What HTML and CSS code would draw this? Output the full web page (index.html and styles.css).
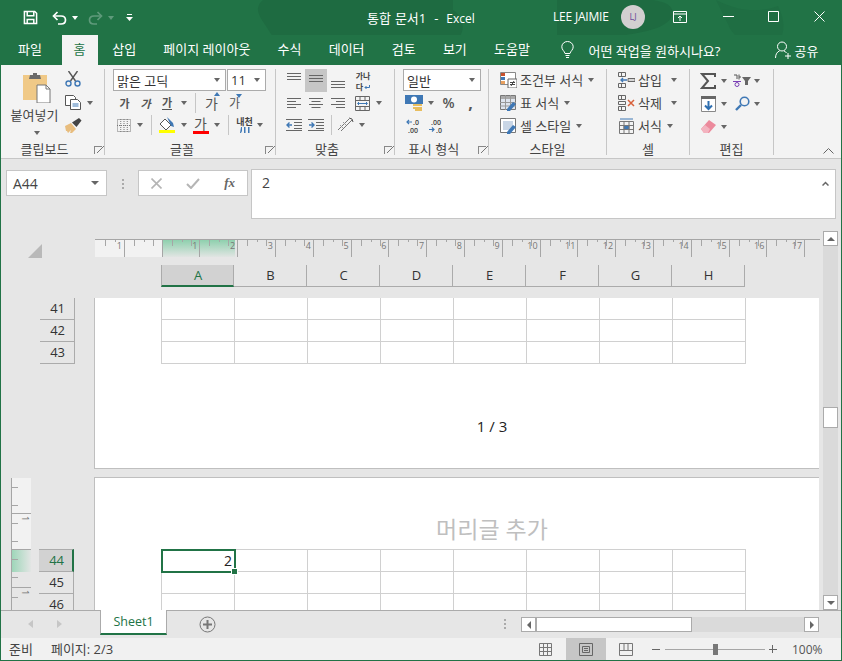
FILE: index.html
```html
<!doctype html>
<html lang="ko">
<head>
    <meta charset="utf-8">
    <title>통합 문서1 - Excel</title>
    <link rel="stylesheet" href="styles.css">
</head>

<body>
<div class="window">
    <div class="titlebar">
        <svg class="title-bg" width="840" height="64" viewBox="0 0 840 64">
            <path d="M262 0h190v10c10 6 14 20 4 30-14 10-60 8-80 14-40 6-60 0-80-6-10-6-20-6-26-14-8-14-20-24-8-34z" fill="#1e6b41"/>
            <path d="M556 0h90c20 0 30 8 24 18-8 12-30 14-50 18-20 4-50 6-64 2z" fill="#1e6b41"/>
            <path d="M715 0c20 10 40 14 62 6 10 20 6 36-10 44-20-2-36-14-40-26z" fill="#1f6e43"/>
        </svg>
        <svg class="qat-save" width="15" height="15" viewBox="0 0 16 16" fill="none" stroke="#fff" stroke-width="1.6"><path d="M1.500 1.500h11l2 2v11h-13z"/><path d="M4.500 2v4h7V2M4.500 14.500V10h7v4.500"/></svg>
        <svg class="qat-undo" width="15" height="14" viewBox="0 0 15 14" fill="none" stroke="#fff" stroke-width="1.7"><path d="M5.500 1L1.500 5l4 4"/><path d="M2 5h7c6 0 6 8 0 8H6"/></svg>
        <span class="caret caret-white qat-caret"></span>
        <svg class="qat-redo" width="15" height="14" viewBox="0 0 15 14" fill="none" stroke="#5f9a7b" stroke-width="1.7"><path d="M9.500 1l4 4-4 4"/><path d="M13 5H6c-6 0-6 8 0 8h3"/></svg>
        <span class="caret caret-dim qat-caret"></span>
        <svg class="qat-more" width="7" height="8" viewBox="0 0 7 8"><path d="M1 0h5v1H1z" fill="#fff"/><path d="M0 3h7L3.500 7z" fill="#fff"/></svg>
        <span class="doc-title">통합 문서1 &nbsp;-&nbsp; <span class="latin">Excel</span></span>
        <span class="user-name">LEE JAIMIE</span>
        <span class="avatar">LJ</span>
        <svg class="win-display" width="14" height="12" viewBox="0 0 14 12" fill="none" stroke="#fff"><path d="M.5 .5h13v11H.5zM.5 3h13M7 10V5M5 7l2-2 2 2"/></svg>
        <svg class="win-min" width="11" height="1" viewBox="0 0 11 1"><path d="M0 0h11v1H0z" fill="#fff"/></svg>
        <svg class="win-max" width="11" height="11" viewBox="0 0 11 11" fill="none" stroke="#fff"><path d="M.5 .5h10v10H.5z"/></svg>
        <svg class="win-close" width="11" height="11" viewBox="0 0 11 11" stroke="#fff"><path d="M.5 .5l10 10M10.500 .5l-10 10"/></svg>
    </div>

    <div class="tabs">
        <span class="tab tab-first">파일</span>
        <span class="tab tab-on">홈</span>
        <span class="tab">삽입</span>
        <span class="tab">페이지 레이아웃</span>
        <span class="tab">수식</span>
        <span class="tab">데이터</span>
        <span class="tab">검토</span>
        <span class="tab">보기</span>
        <span class="tab">도움말</span>
        <svg class="bulb" width="13" height="18" viewBox="0 0 13 18" fill="none" stroke="#fff"><path d="M4 12.500C3.500 10 .8 9 .8 5.800a5.700 5.300 0 0 1 11.400 0C12.200 9 9.500 10 9 12.500z"/><path d="M4.500 14.500h4M5 16.500h3"/></svg>
        <span class="tell-me">어떤 작업을 원하시나요?</span>
        <svg class="share-icon" width="17" height="18" viewBox="0 0 17 18" fill="none" stroke="#fff"><circle cx="7" cy="5.500" r="4.500"/><path d="M.5 17c0-4 2-6.500 4-7M9 10c1 .3 2 1 2.500 2M10 15h6M13 12v6"/></svg>
        <span class="share">공유</span>
    </div>

    <div class="ribbon">
        <div class="group g-clip">
            <div class="group-body clip-body">
                <div class="paste">
                    <svg width="28" height="30" viewBox="0 0 28 30"><path d="M0 3h24v25H0z" fill="#f0c987" transform="translate(0 -1)"/><path d="M7 2h3V0h4v2h3l1 4H6z" fill="#6a6a6a"/><path d="M14 12h9l4 4v14H14z" fill="#fff" stroke="#777"/><path d="M23 12v4h4" fill="none" stroke="#777"/></svg>
                    <span class="paste-label">붙여넣기</span>
                    <span class="caret"></span>
                </div>
                <div class="clip-tools">
                    <svg width="16" height="16" viewBox="0 0 16 16" fill="none"><path d="M3.500 0l7 10M12.500 0l-7 10" stroke="#555" stroke-width="1.400"/><circle cx="3.500" cy="12.500" r="2.500" stroke="#3f78b5" stroke-width="1.400"/><circle cx="12.500" cy="12.500" r="2.500" stroke="#3f78b5" stroke-width="1.400"/></svg>
                    <div class="tool-line">
                        <svg width="16" height="15" viewBox="0 0 16 15" fill="#fff" stroke="#555"><path d="M.5 .5h8l2 2v8H.5z"/><path d="M5.500 4.500h7l3 3v7h-10z"/><path d="M7.500 9h6M7.500 11h6" stroke="#3f78b5"/></svg>
                        <span class="caret"></span>
                    </div>
                    <svg width="17" height="15" viewBox="0 0 17 15"><path d="M0 8l6-3 5 6-4 4H5l1-3-3 3-1-2-1 0z" fill="#e8bd7e"/><path d="M7 4.500l7-4.500 2.500 2.500-5 6.500z" fill="#444"/></svg>
                </div>
            </div>
            <div class="group-label"><span>클립보드</span><i class="launcher"></i></div>
        </div>

        <div class="group g-font">
            <div class="group-body">
                <div class="font-selects">
                    <span class="select sel-font">맑은 고딕<span class="caret"></span></span>
                    <span class="select sel-size">11<span class="caret"></span></span>
                </div>
                <div class="font-row font-row2">
                    <b class="ga">가</b>
                    <i class="ga">가</i>
                    <span class="ga ga-u">가</span>
                    <span class="caret"></span>
                    <span class="vsep"></span>
                    <span class="ga-size ga-up">가</span>
                    <span class="ga-size ga-down">가</span>
                </div>
                <div class="font-row font-row3">
                    <svg width="14" height="13" viewBox="0 0 14 13" fill="none" stroke="#777" stroke-dasharray="1 1"><path d="M.5 .5h13v12H.5zM7 0v13M0 6.500h14M3.750 0v13M10.250 0v13"/></svg>
                    <span class="caret"></span>
                    <span class="vsep"></span>
                    <svg width="16" height="16" viewBox="0 0 16 16"><path d="M1 7l5-5 6 6-5 5z" fill="#fff" stroke="#555"/><path d="M8 0l6 6 1 4-3-1z" fill="#3f78b5"/><path d="M0 13h16v3H0z" fill="#ff0"/></svg>
                    <span class="caret"></span>
                    <span class="color-a">가</span>
                    <span class="caret"></span>
                    <span class="vsep"></span>
                    <span class="phonetic">내천<svg width="10" height="6" viewBox="0 0 10 6" fill="#3f78b5"><path d="M1 0h1v4L1 6H0zM4 0h1.500v6H4zM8 0h1.500v6H8z"/></svg></span>
                    <span class="caret"></span>
                </div>
            </div>
            <div class="group-label"><span>글꼴</span><i class="launcher"></i></div>
        </div>

        <div class="group g-align">
            <div class="group-body">
                <div class="align-row align-row1">
                    <svg width="14" height="11" viewBox="0 0 14 11" stroke="#666"><path d="M0 .5h14M0 3.500h14M0 6.500h14"/></svg>
                    <span class="align-on"><svg width="14" height="11" viewBox="0 0 14 11" stroke="#666"><path d="M0 2.500h14M0 5.500h14M0 8.500h14"/></svg></span>
                    <svg class="a-low" width="14" height="11" viewBox="0 0 14 11" stroke="#666"><path d="M0 4.500h14M0 7.500h14M0 10.500h14"/></svg>
                    <span class="wrap-txt">가나<br>다<svg width="6" height="5" viewBox="0 0 6 5" fill="none" stroke="#3f78b5"><path d="M5.500 0v2.500H1M2.500 1L1 2.500 2.500 4"/></svg></span>
                </div>
                <div class="align-row align-row2">
                    <svg width="14" height="11" viewBox="0 0 14 11" stroke="#666"><path d="M0 .5h14M0 3.500h9M0 6.500h14M0 9.500h9"/></svg>
                    <svg width="14" height="11" viewBox="0 0 14 11" stroke="#666"><path d="M0 .5h14M2.500 3.500h9M0 6.500h14M2.500 9.500h9"/></svg>
                    <svg width="14" height="11" viewBox="0 0 14 11" stroke="#666"><path d="M0 .5h14M5 3.500h9M0 6.500h14M5 9.500h9"/></svg>
                    <svg width="15" height="15" viewBox="0 0 15 15" fill="none" stroke="#666"><path d="M.5 .5h14v14H.5zM.5 4.500h14M.5 10.500h14M5 .5v4M10 .5v4M5 10.500v4M10 10.500v4"/><path d="M3 7.500h9M4 6l-1.500 1.500L4 9M11 6l1.500 1.500L11 9" stroke="#3f78b5"/></svg>
                    <span class="caret"></span>
                </div>
                <div class="align-row align-row3">
                    <svg width="16" height="12" viewBox="0 0 16 12" fill="none" stroke="#666"><path d="M0 .5h16M8 3.500h8M8 6.500h8M8 9.500h8M0 11.500h16" stroke-width="1"/><path d="M6 6H1M3.500 3.500L1 6l2.500 2.500" stroke="#3f78b5" stroke-width="1.400"/></svg>
                    <svg width="16" height="12" viewBox="0 0 16 12" fill="none" stroke="#666"><path d="M0 .5h16M8 3.500h8M8 6.500h8M8 9.500h8M0 11.500h16"/><path d="M1 6h5M3.500 3.500L6 6 3.500 8.500" stroke="#3f78b5" stroke-width="1.400"/></svg>
                    <span class="vsep"></span>
                    <svg width="18" height="16" viewBox="0 0 18 16" fill="none" stroke="#777"><path d="M1 13L12 2M4 14L15 3"/><path d="M12 1l3 1 1 3" stroke="#555"/><path d="M3 8l3 3M6 5l3 3" stroke="#999"/></svg>
                    <span class="caret"></span>
                </div>
            </div>
            <div class="group-label"><span>맞춤</span><i class="launcher"></i></div>
        </div>

        <div class="group g-num">
            <div class="group-body">
                <span class="select sel-num">일반<span class="caret"></span></span>
                <div class="num-row num-row2">
                    <svg width="18" height="16" viewBox="0 0 18 16"><path d="M0 0h18v9H0z" fill="#3f78b5"/><circle cx="9" cy="4.500" r="3" fill="#fff"/><path d="M8 9h9v2H8zM8 12h9v2H8zM10 14h7v2h-7z" fill="#e8bd5e"/></svg>
                    <span class="caret"></span>
                    <span class="pct">%</span>
                    <span class="comma">,</span>
                </div>
                <div class="num-row num-row3">
                    <svg width="16" height="15" viewBox="0 0 16 15"><path d="M1 4h5M3 2L1 4l2 2" fill="none" stroke="#3f78b5" stroke-width="1.200"/><text x="7" y="7" class="dec">.0</text><text x="2" y="14.500" class="dec">.00</text></svg>
                    <svg width="16" height="15" viewBox="0 0 16 15"><text x="3" y="6.500" class="dec">.00</text><path d="M1 11.500h5M4 9.500l2 2-2 2" fill="none" stroke="#3f78b5" stroke-width="1.200"/><text x="8" y="14.500" class="dec">.0</text></svg>
                </div>
            </div>
            <div class="group-label"><span>표시 형식</span><i class="launcher"></i></div>
        </div>

        <div class="group g-style">
            <div class="group-body">
                <div class="cmd">
                    <svg width="17" height="16" viewBox="0 0 17 16"><path d="M.5 .5h15v12H.5z" fill="#fff" stroke="#888"/><path d="M1 1h4v3H1z" fill="#c8502d"/><path d="M1 5h4v3H1z" fill="#3f78b5"/><path d="M1 9h4v3H1z" fill="#e8a05e"/><path d="M8 7h9v9H8z" fill="#fff" stroke="#666"/><path d="M10 10.500h5M10 12.500h5M11 14l3-5" stroke="#444" fill="none"/></svg>
                    <span>조건부 서식</span><span class="caret"></span>
                </div>
                <div class="cmd">
                    <svg width="17" height="16" viewBox="0 0 17 16"><path d="M.5 .5h15v14H.5z" fill="#dfe5ee" stroke="#777"/><path d="M1 1h14v3H1z" fill="#aaa"/><path d="M5.500 0v15M10.500 0v15M0 7.500h16M0 11h16" stroke="#999"/><path d="M7 14l6-7 3 2-6 7H7z" fill="#3f78b5"/></svg>
                    <span>표 서식</span><span class="caret"></span>
                </div>
                <div class="cmd">
                    <svg width="17" height="16" viewBox="0 0 17 16"><path d="M.5 .5h15v14H.5z" fill="#fff" stroke="#777"/><path d="M3 3h10v9H3z" fill="#c9d6e6"/><path d="M7 14l6-7 3 2-6 7H7z" fill="#3f78b5"/></svg>
                    <span>셀 스타일</span><span class="caret"></span>
                </div>
            </div>
            <div class="group-label"><span>스타일</span></div>
        </div>

        <div class="group g-cell">
            <div class="group-body">
                <div class="cmd">
                    <svg width="17" height="16" viewBox="0 0 17 16" fill="none" stroke="#666"><path d="M.5 .5h7v4h-7zM3.500 .5v4M.5 11.500h7v4h-7zM3.500 11.500v4"/><path d="M10 6.500h7v3h-7z" fill="#d5d5d5"/><path d="M9 8H3M5 6L3 8l2 2" stroke="#3f78b5" stroke-width="1.400"/></svg>
                    <span>삽입</span><span class="caret caret-far"></span>
                </div>
                <div class="cmd">
                    <svg width="17" height="16" viewBox="0 0 17 16" fill="none" stroke="#666"><path d="M.5 .5h7v4h-7zM3.500 .5v4M.5 11.500h7v4h-7zM3.500 11.500v4M.5 6.500h7v3h-7z"/><path d="M10 5l6 6M16 5l-6 6" stroke="#d8603a" stroke-width="1.500"/></svg>
                    <span>삭제</span><span class="caret caret-far"></span>
                </div>
                <div class="cmd">
                    <svg width="17" height="16" viewBox="0 0 17 16" fill="none" stroke="#777"><path d="M1.500 3.500h14v12h-14zM1.500 7.500h14M1.500 11.500h14M6 3.500v12M11 3.500v12"/><path d="M6 7.500h5v4H6z" fill="#3f78b5"/><path d="M2 1h13" stroke="#3f78b5"/></svg>
                    <span>서식</span><span class="caret"></span>
                </div>
            </div>
            <div class="group-label"><span>셀</span></div>
        </div>

        <div class="group g-edit">
            <div class="group-body">
                <div class="edit-row">
                    <svg width="16" height="16" viewBox="0 0 16 16" fill="none" stroke="#555" stroke-width="2"><path d="M15 4V1H2l6 7-6 7h13v-3"/></svg>
                    <span class="caret"></span>
                    <span class="sort"><svg width="8" height="13" viewBox="0 0 8 13" fill="none"><path d="M1 1h3v4M6 .5v5M6 3h2" stroke="#555"/><path d="M0 7.500h8" stroke="#7a3fb5"/><circle cx="4" cy="10.500" r="2" stroke="#7a3fb5"/></svg><svg width="9" height="8" viewBox="0 0 9 8"><path d="M0 0h9L6 4v4H3V4z" fill="#666"/></svg></span>
                    <span class="caret"></span>
                </div>
                <div class="edit-row">
                    <svg width="15" height="16" viewBox="0 0 15 16"><path d="M.5 .5h14v15H.5z" fill="#fff" stroke="#888"/><path d="M0 0h15v3H0z" fill="#666"/><path d="M7.500 5v8M4 9.500l3.500 3.500 3.500-3.500" fill="none" stroke="#2f6fb0" stroke-width="2"/></svg>
                    <span class="caret"></span>
                    <svg width="15" height="15" viewBox="0 0 15 15" fill="none" stroke="#3f78b5" stroke-width="1.600"><circle cx="9.500" cy="5.500" r="4.300"/><path d="M6 9l-5 5" stroke-width="2.400"/></svg>
                    <span class="caret"></span>
                </div>
                <div class="edit-row">
                    <svg width="15" height="13" viewBox="0 0 15 13"><path d="M0 9l8-9 7 5-7 8H3z" fill="#ec8a9c"/><path d="M0 9l4-4 5 4-2 4H3z" fill="#f3b3bf"/></svg>
                    <span class="caret"></span>
                </div>
            </div>
            <div class="group-label"><span>편집</span></div>
        </div>

        <div class="ribbon-end">
            <svg width="11" height="6" viewBox="0 0 11 6" fill="none" stroke="#666"><path d="M.5 5.500l5-5 5 5"/></svg>
        </div>
    </div>

    <div class="formula-bar">
        <div class="name-box"><span>A44</span><span class="caret"></span></div>
        <div class="fb-dots"><i></i><i></i><i></i></div>
        <div class="fb-btns">
            <svg width="11" height="11" viewBox="0 0 11 11" stroke="#b5b5b5" stroke-width="1.600"><path d="M.5 .5l10 10M10.500 .5l-10 10"/></svg>
            <svg width="14" height="11" viewBox="0 0 14 11" fill="none" stroke="#b5b5b5" stroke-width="2"><path d="M1 6l4 4 8-9"/></svg>
            <span class="fx">fx</span>
        </div>
        <div class="fb-input"><span>2</span><svg width="7" height="5" viewBox="0 0 7 5" fill="none" stroke="#666" stroke-width="1.500"><path d="M.5 4.500l3-3 3 3"/></svg></div>
    </div>

    <div class="sheet">
        <div class="sheet-main">
            <div class="top-strip">
                <div class="corner"><i class="tri"></i></div>
                <div class="top-right">
                    <div class="ruler">
                        <span class="rc rc-first">1</span>
                        <span class="rc"></span>
                        <span class="rc">1</span><span class="rc">2</span><span class="rc">3</span><span class="rc">4</span><span class="rc">5</span><span class="rc">6</span>
                        <span class="rc">7</span><span class="rc">8</span><span class="rc">9</span><span class="rc">10</span><span class="rc">11</span><span class="rc">12</span>
                        <span class="rc">13</span><span class="rc">14</span><span class="rc">15</span><span class="rc">16</span><span class="rc">17</span>
                    </div>
                    <div class="col-heads">
                        <span class="ch ch-on">A</span><span class="ch">B</span><span class="ch">C</span><span class="ch">D</span>
                        <span class="ch">E</span><span class="ch">F</span><span class="ch">G</span><span class="ch">H</span>
                    </div>
                </div>
            </div>
            <div class="viewport">
                <div class="page-row">
                    <div class="gutter">
                        <div class="row-heads">
                            <span class="rh">41</span><span class="rh">42</span><span class="rh">43</span>
                        </div>
                    </div>
                    <div class="page page-one">
                        <div class="grid">
                            <i></i><i></i><i></i><i></i><i></i><i></i><i></i><i></i>
                            <i></i><i></i><i></i><i></i><i></i><i></i><i></i><i></i>
                            <i></i><i></i><i></i><i></i><i></i><i></i><i></i><i></i>
                        </div>
                        <div class="page-foot">1 / 3</div>
                    </div>
                </div>
                <div class="page-row page-row-two">
                    <div class="gutter">
                        <div class="vruler">
                            <span class="vr"></span><span class="vr vr-num">1</span><span class="vr vr-blank"></span><span class="vr vr-num">1</span>
                        </div>
                        <div class="row-heads row-heads-two">
                            <span class="rh rh-on">44</span><span class="rh">45</span><span class="rh">46</span>
                        </div>
                    </div>
                    <div class="page page-two">
                        <div class="page-head">머리글 추가</div>
                        <div class="grid">
                            <i class="cell-on">2</i><i></i><i></i><i></i><i></i><i></i><i></i><i></i>
                            <i></i><i></i><i></i><i></i><i></i><i></i><i></i><i></i>
                            <i></i><i></i><i></i><i></i><i></i><i></i><i></i><i></i>
                        </div>
                    </div>
                </div>
            </div>
        </div>
        <div class="vscroll">
            <span class="sb-btn"><span class="tri-up"></span></span>
            <span class="sb-thumb"></span>
            <span class="sb-btn sb-down"><span class="tri-down"></span></span>
        </div>
    </div>

    <div class="tabbar">
        <span class="nav-l"></span>
        <span class="nav-r"></span>
        <span class="sheet-tab">Sheet1</span>
        <svg class="add-sheet" width="17" height="17" viewBox="0 0 17 17" fill="none" stroke="#777"><circle cx="8.500" cy="8.500" r="7.500"/><path d="M8.500 4v9M4 8.500h9" stroke-width="2"/></svg>
        <div class="fb-dots tab-dots"><i></i><i></i><i></i></div>
        <div class="hscroll">
            <span class="hs-btn"><span class="tri-left"></span></span>
            <span class="hs-thumb"></span>
            <span class="hs-btn hs-end"><span class="tri-right"></span></span>
        </div>
    </div>

    <div class="statusbar">
        <span class="st-ready">준비</span>
        <span class="st-page">페이지: 2/3</span>
        <span class="view-btn view-first"><svg width="13" height="13" viewBox="0 0 13 13" fill="none" stroke="#777"><path d="M.5 .5h12v12H.5zM.5 4.500h12M.5 8.500h12M4.500 .5v12M8.500 .5v12"/></svg></span>
        <span class="view-btn view-on"><svg width="14" height="13" viewBox="0 0 14 13" fill="none" stroke="#666"><path d="M.5 .5h13v12H.5zM3.500 3.500h7v6h-7zM5 5.500h4M5 7.500h4"/></svg></span>
        <span class="view-btn"><svg width="14" height="13" viewBox="0 0 14 13" fill="none" stroke="#777"><path d="M.5 .5h13v12H.5zM.5 7.500h13M5 .5v7M9 .5v7"/></svg></span>
        <span class="zoom-minus"></span>
        <span class="zoom-track"><i></i></span>
        <span class="zoom-plus"></span>
        <span class="zoom-val">100%</span>
    </div>
</div>
</body>

</html>
```

FILE: styles.css
```css
* {box-sizing: border-box;}
html, body {margin: 0; padding: 0; overflow: hidden;}
body {font-family: "Open Sans", "Noto Sans CJK KR", sans-serif; font-size: 13px; color: #444;}
i {font-style: normal;}
svg {display: block; flex: none;}

.window {width: 842px; height: 661px; border: 1px solid #217346; border-top: 0; background: #e6e6e6; display: flex; flex-direction: column;}

/* title bar */
.titlebar {height: 35px; background: #217346; display: flex; align-items: center; color: #fff; position: relative; flex: none;}
.title-bg {position: absolute; left: 0; top: 0;}
.titlebar > *:not(.title-bg) {position: relative;}
.qat-save {margin-left: 22px;}
.qat-undo {margin-left: 14px;}
.qat-caret {margin-left: 5px;}
.qat-redo {margin-left: 10px;}
.qat-more {margin-left: 12px;}
.doc-title {margin-left: 234px; width: 186px; white-space: nowrap; word-spacing: 0.6px;}
.latin {font-size: 12px;}
.user-name {width: 68px; white-space: nowrap; letter-spacing: -0.2px; font-size: 12px; margin-bottom: 2px;}
.avatar {width: 24px; height: 24px; border-radius: 50%; background: #d2cfd0; color: #6b4c9a; font-size: 9px; text-align: center; line-height: 24px; margin-bottom: 2px;}
.win-display {margin-left: 28px; margin-bottom: 2px;}
.win-min {margin-left: 36px; margin-bottom: 2px;}
.win-max {margin-left: 34px; margin-bottom: 2px;}
.win-close {margin-left: 35px; margin-bottom: 2px;}

.caret {display: inline-block; flex: none; width: 0; height: 0; border-left: 3.5px solid transparent; border-right: 3.5px solid transparent; border-top: 4px solid #666;}
.caret-white {border-top-color: #fff;}
.caret-dim {border-top-color: #5f9a7b;}

/* tabs */
.tabs {height: 30px; background: #217346; display: flex; align-items: center; color: #fff; flex: none; position: relative; white-space: nowrap;}
.tab {height: 30px; line-height: 29px; padding: 0 13.6px;}
.tab-first {margin-left: 3.5px;}
.tab-on {margin-left: 6px; padding: 0 12px; background: #f3f3f3; color: #217346; margin-right: 1px;}
.bulb {margin-left: 18px;}
.tell-me {margin-left: 14px;}
.share-icon {margin-left: 55px;}
.share {margin-left: 2px;}

/* ribbon */
.ribbon {height: 94px; background: #f3f3f3; border-bottom: 1px solid #c6c6c6; display: flex; flex: none; padding-top: 4px; padding-bottom: 3px;}
.group {display: flex; flex-direction: column; border-right: 1px solid #c6c6c6; flex: none;}
.group-body {flex: 1; min-height: 0;}
.group-label {height: 14px; display: flex; align-items: center; color: #444;}
.group-label span {flex: 1; text-align: center;}
.launcher {width: 16px; height: 9px; flex: none; margin-top: 4px; background: linear-gradient(135deg, transparent 45%, #777 45%, #777 55%, transparent 55%) 9px 0 / 7px 7px no-repeat; position: relative;}
.launcher::before {content: ""; position: absolute; left: 6px; top: 0; width: 7px; height: 7px; border-top: 1px solid #888; border-left: 1px solid #888;}
.g-clip {width: 104px;}
.g-font {width: 171px;}
.g-align {width: 119px;}
.g-num {width: 94px;}
.g-style {width: 118px;}
.g-cell {width: 83px;}
.g-edit {width: 84px;}
.ribbon-end {flex: 1; display: flex; align-items: flex-end; justify-content: flex-end; padding: 0 7px 1px 0;}

.clip-body {display: flex;}
.paste {width: 63px; margin-left: 4px; display: flex; flex-direction: column; align-items: center; padding-top: 4px;}
.paste-label {margin: 2px 4px 0 0; line-height: 20px; white-space: nowrap;}
.paste .caret {margin-top: 6px;}
.clip-tools {display: flex; flex-direction: column; gap: 8px; margin-left: -3px; padding-top: 2px;}
.tool-line {display: flex; align-items: center; gap: 6px;}

.select {display: flex; align-items: center; justify-content: space-between; height: 22px; background: #fff; border: 1px solid #ababab; padding: 0 5px 0 3px; color: #333; flex: none;}
.font-selects {display: flex; gap: 1px; padding: 0 0 0 8px; margin-bottom: 1px;}
.sel-font {width: 113px;}
.sel-size {width: 39px;}
.font-row {display: grid; align-items: center; justify-items: center; height: 22px; padding-left: 9px;}
.font-row2 {grid-template-columns: 21px 21px 22px 12px 10px 23px 23px;}
.font-row3 {grid-template-columns: 20px 12px 10px 22px 11px 23px 10px 12px 21px 10px;}
.ga {font-size: 11px; font-weight: 700; color: #555;}
i.ga {font-style: italic;}
.ga-u {border-bottom: 1px solid #555; line-height: 13px;}
.ga-size {font-size: 14px; color: #555; position: relative;}
.ga-down {font-size: 12px;}
.ga-up::after {content: ""; position: absolute; left: 9px; top: -1px; border-left: 3px solid transparent; border-right: 3px solid transparent; border-bottom: 4px solid #3f78b5;}
.ga-down::after {content: ""; position: absolute; left: 7px; top: 0; border-left: 3px solid transparent; border-right: 3px solid transparent; border-top: 4px solid #3f78b5;}
.vsep {width: 1px; height: 20px; background: #c6c6c6;}
.color-a {font-size: 14px; line-height: 14px; color: #555; border-bottom: 3px solid #f00; width: 16px; text-align: center;}
.phonetic {display: flex; flex-direction: column; align-items: center; font-size: 9px; line-height: 10px; color: #444; font-weight: 700;}

.align-row {display: grid; align-items: center; justify-items: center; height: 22px; padding-left: 7px;}
.align-row1 {grid-template-columns: 22px 22px 22px 2px 24px; height: 23px;}
.align-row1 svg:first-child {margin-bottom: 5px;}
.align-row2 {grid-template-columns: 22px 22px 22px 2px 23px 10px;}
.align-row2 > svg:nth-child(4), .align-row1 .wrap-txt {grid-column: 5;}
.align-row2 .caret {grid-column: 6;}
.align-row3 {grid-template-columns: 22px 22px 8px 22px 9px;}
.align-on {width: 22px; height: 23px; background: #c6c6c6; display: flex; align-items: center; justify-content: center;}
.a-low {margin-top: 4px;}
.wrap-txt {font-size: 8px; line-height: 11px; color: #444; text-align: center; font-weight: 700;}
.wrap-txt svg {display: inline-block; margin-left: 1px;}

.g-num .group-body {padding-left: 8px;}
.sel-num {width: 78px; padding-left: 3px;}
.num-row {display: grid; align-items: center; justify-items: center; height: 23px;}
.num-row2 {grid-template-columns: 22px 11px 25px 19px;}
.num-row3 {grid-template-columns: 21px 23px;}
.pct {font-size: 14px; font-weight: 600; color: #555;}
.comma {font-size: 16px; font-weight: 700; line-height: 12px; color: #555;}
.dec {font-size: 7px; fill: #444; font-weight: 600;}

.g-style .group-body, .g-cell .group-body {margin-top: -1px;}
.cmd {display: flex; align-items: center; height: 23px; padding-left: 11px; white-space: nowrap; color: #444;}
.cmd svg {margin-right: 3px;}
.cmd .caret {margin-left: 5px;}
.cmd .caret-far {margin-left: 9px;}

.edit-row {display: grid; grid-template-columns: 16px 16px 20px 10px; align-items: center; justify-items: center; height: 23px; padding-left: 10px;}
.sort {display: flex; align-items: center; gap: 1px;}

/* formula bar */
.formula-bar {display: flex; padding: 10px 5px 0 5px; height: 72px; flex: none; align-items: flex-start;}
.name-box {width: 101px; height: 26px; margin-top: 1px; background: #fff; border: 1px solid #c6c6c6; display: flex; align-items: center; justify-content: space-between; padding: 0 7px 0 6px; font-size: 14px; color: #444;}
.name-box .caret {border-left-width: 4px; border-right-width: 4px;}
.fb-dots {width: 31px; display: flex; flex-direction: column; align-items: center; gap: 2px; padding-top: 10px;}
.fb-dots i {width: 2px; height: 2px; background: #aaa;}
.fb-btns {width: 110px; height: 26px; margin-top: 1px; background: #fff; border: 1px solid #c6c6c6; display: flex; align-items: center; justify-content: space-between; padding: 0 12px;}
.fx {font-family: "Liberation Serif", serif; font-style: italic; font-weight: 700; font-size: 13px; color: #666;}
.fb-input {margin-left: 3px; width: 585px; height: 50px; background: #fff; border: 1px solid #c6c6c6; display: flex; justify-content: space-between; padding: 3px 6px 0 10px; font-size: 14px; color: #444;}
.fb-input svg {margin-top: 8px;}

/* sheet */
.sheet {height: 379px; flex: none; display: flex;}
.sheet-main {width: 822px; display: flex; flex-direction: column; padding-top: 8px;}
.top-strip {display: flex; height: 59px; flex: none;}
.corner {width: 94px; padding: 5px 0 0 27px;}
.tri {display: block; width: 0; height: 0; border-left: 14px solid transparent; border-bottom: 14px solid #b9b9b9;}
.top-right {flex: 1; min-width: 0;}
.ruler {height: 18px; display: flex; border-top: 1px solid #a6a6a6; width: 725px; background: linear-gradient(#8fd0ae, #e6e6e6) 67px 0 / 73px 18px no-repeat, linear-gradient(#f2f2f2, #f2f2f2) 0 0 / 67px 18px no-repeat;}
.rc {flex: none; width: 37.800px; height: 17px; border-right: 1px solid #a6a6a6; text-align: right; padding-right: 2px; font-size: 9px; line-height: 12px; color: #777;
    background: linear-gradient(#a6a6a6, #a6a6a6) 9px 0 / 1px 6px no-repeat, linear-gradient(#a6a6a6, #a6a6a6) 19px 0 / 1px 2px no-repeat, linear-gradient(#a6a6a6, #a6a6a6) 28px 0 / 1px 6px no-repeat;}
.rc-first {width: 29.800px; background: linear-gradient(#a6a6a6, #a6a6a6) 10px 0 / 1px 6px no-repeat, linear-gradient(#a6a6a6, #a6a6a6) 20px 0 / 1px 2px no-repeat;}
.col-heads {display: flex; margin: 8px 0 0 66px; height: 22px;}
.ch {width: 73px; height: 22px; line-height: 20px; padding-left: 1px; text-align: center; font-size: 13px; color: #333; border-right: 1px solid #ababab; border-bottom: 1px solid #ababab; flex: none;}
.ch-on {background: #d2d2d2; color: #217346; border-bottom: 2px solid #217346; border-left: 1px solid #ababab;}

.viewport {height: 312px; overflow: hidden; flex: none;}
.page-row {display: flex; padding-right: 4px;}
.page-row-two {margin-top: 8px;}
.gutter {width: 93px; flex: none; display: flex; align-items: flex-start;}
.row-heads {margin-left: 39px; width: 35px; display: flex; flex-direction: column;}
.row-heads-two {margin-left: 8px; margin-top: 72px;}
.rh {height: 22px; line-height: 21px; text-align: right; padding-right: 9px; font-size: 13px; color: #333; border-right: 1px solid #ababab; border-bottom: 1px solid #ababab; flex: none;}
.rh-on {background: #d2d2d2; color: #217346; border-right: 2px solid #217346; border-top: 1px solid #ababab; height: 23px; padding-right: 8px;}
.page {flex: 1; background: #fff; border-left: 1px solid #bfbfbf; padding-left: 66px;}
.page-one {height: 171px; border-bottom: 1px solid #bfbfbf;}
.page-two {border-top: 1px solid #bfbfbf; height: 170px;}
.grid {display: grid; grid-template-columns: repeat(8, 73px); grid-auto-rows: 22px; width: 585px; border-left: 1px solid #d0d0d0;}
.page-two .grid {border-top: 1px solid #d0d0d0;}
.grid i {border-right: 1px solid #d0d0d0; border-bottom: 1px solid #d0d0d0;}
.grid .cell-on {position: relative; outline: 2px solid #217346; outline-offset: -1px; text-align: right; padding-right: 2px; font-size: 14px; line-height: 22px; color: #222;}
.cell-on::after {content: ""; position: absolute; right: -3px; bottom: -3px; width: 5px; height: 5px; background: #217346; border: 1px solid #fff; box-sizing: content-box; margin: -1px;}
.page-foot {margin-top: 52px; width: 662px; margin-left: -66px; text-align: center; padding-left: 132px; font-size: 15px; line-height: 20px; color: #222;}
.page-head {height: 71px; width: 662px; padding-top: 38px; margin-left: -66px; padding-left: 132px; text-align: center; font-size: 23px; line-height: 26px; color: #bfbfbf;}

.vruler {width: 20px; margin-left: 10px; margin-top: 1px; display: flex; flex-direction: column; border-left: 1px solid #a6a6a6; height: 140px; background: linear-gradient(90deg, #9ed6b9, #e6e6e6) 0 71px / 20px 23px no-repeat, linear-gradient(#f2f2f2, #f2f2f2) 0 0 / 20px 71px no-repeat; flex: none;}
.vr {height: 36px; flex: none; border-bottom: 1px solid #a6a6a6; font-size: 9px; color: #777;
    background: linear-gradient(#a6a6a6, #a6a6a6) 0 9px / 6px 1px no-repeat, linear-gradient(#a6a6a6, #a6a6a6) 0 27px / 6px 1px no-repeat;}
.vr-num {writing-mode: vertical-rl; text-align: left; line-height: 12px; padding-top: 2px;}
.vr-blank {height: 38px;}

.vscroll {width: 15px; background: #dadada; display: flex; flex-direction: column; height: 379px; flex: none;}
.sb-btn {width: 15px; height: 15px; background: #fff; border: 1px solid #ababab; display: flex; align-items: center; justify-content: center; flex: none;}
.sb-thumb {width: 15px; height: 21px; background: #fff; border: 1px solid #ababab; margin-top: 161px; flex: none;}
.sb-down {margin-top: auto;}
.tri-up {border-left: 4px solid transparent; border-right: 4px solid transparent; border-bottom: 4px solid #666;}
.tri-down {border-left: 4px solid transparent; border-right: 4px solid transparent; border-top: 4px solid #666;}
.tri-left {border-top: 4px solid transparent; border-bottom: 4px solid transparent; border-right: 4px solid #666;}
.tri-right {border-top: 4px solid transparent; border-bottom: 4px solid transparent; border-left: 4px solid #666;}

/* sheet tabs */
.tabbar {height: 28px; background: #e6e6e6; border-top: 1px solid #ababab; display: flex; align-items: flex-start; flex: none;}
.nav-l {margin: 9px 0 0 27px; border-top: 4px solid transparent; border-bottom: 4px solid transparent; border-right: 5px solid #c6c6c6;}
.nav-r {margin: 9px 0 0 24px; border-top: 4px solid transparent; border-bottom: 4px solid transparent; border-left: 5px solid #c6c6c6;}
.sheet-tab {margin: -1px 0 0 38px; width: 67px; height: 25px; background: #fff; border: 1px solid #ababab; border-top: 0; border-bottom: 2px solid #217346; text-align: center; line-height: 24px; font-size: 12.500px; color: #217346;}
.add-sheet {margin: 5px 0 0 32px;}
.tab-dots {width: 6px; margin-left: 286px; padding-top: 8px;}
.hscroll {margin: 6px 0 0 13px; width: 298px; height: 15px; background: #dadada; display: flex;}
.hs-btn {width: 15px; height: 15px; background: #fff; border: 1px solid #ababab; display: flex; align-items: center; justify-content: center; flex: none;}
.hs-thumb {width: 156px; height: 15px; background: #fff; border: 1px solid #ababab; flex: none;}
.hs-end {margin-left: auto;}

/* status bar */
.statusbar {flex: 1; background: #f1f1f1; display: flex; align-items: center; color: #444; white-space: nowrap;}
.st-ready {margin: 0 0 2px 8px;}
.st-page {margin: 0 0 2px 18px; width: 484px;}
.view-btn {width: 40px; height: 22px; display: flex; align-items: center; justify-content: center; flex: none;}
.view-first {margin-left: -9px;}
.view-on {background: #c6c6c6;}
.zoom-minus {width: 8px; height: 1px; background: #666; margin-left: 6px;}
.zoom-track {width: 100px; height: 1px; background: #a6a6a6; margin-left: 5px; position: relative;}
.zoom-track i {position: absolute; left: 48px; top: -5px; width: 5px; height: 11px; background: #777;}
.zoom-plus {width: 8px; height: 8px; margin-left: 4px; background: linear-gradient(#666, #666) 0 3.500px / 8px 1px no-repeat, linear-gradient(#666, #666) 3.500px 0 / 1px 8px no-repeat;}
.zoom-val {margin-left: 15px; color: #555; font-size: 12px;}
```
